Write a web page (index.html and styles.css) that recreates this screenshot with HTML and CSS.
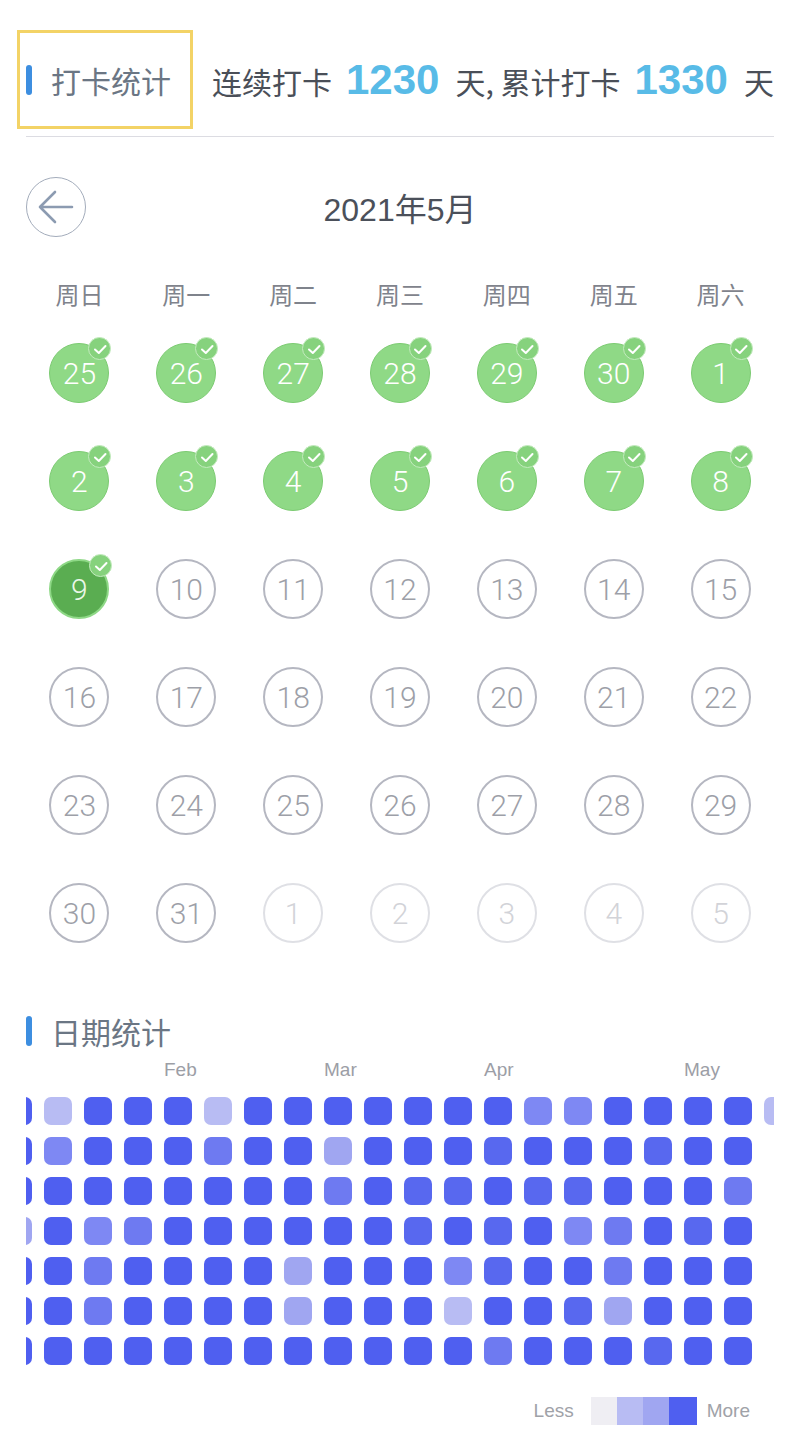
FILE: index.html
```html
<!DOCTYPE html>
<html lang="zh-CN">
<head>
  <meta charset="UTF-8" />
  <title>打卡统计</title>
  <link rel="stylesheet" href="styles.css">
</head>
<body>
  <div class="page">
    <div class="header">
      <div class="title-box">
        <h1 class="section-title">打卡统计</h1>
      </div>
      <p class="summary">连续打卡<b>1230</b>天, 累计打卡<b>1330</b>天</p>
    </div>
    <div class="divider"></div>

    <div class="calendar">
      <div class="cal-nav">
        <button class="nav-btn" aria-label="上个月">
          <svg width="36" height="36" viewBox="0 0 36 36">
            <path d="M2 18H34M17 3L2 18L17 33" fill="none" stroke="#8c9bb1" stroke-width="2.6" stroke-linecap="round" stroke-linejoin="round"/>
          </svg>
        </button>
        <h2 class="month-title">2021年5月</h2>
      </div>

      <div class="weekdays">
        <span>周日</span><span>周一</span><span>周二</span><span>周三</span><span>周四</span><span>周五</span><span>周六</span>
      </div>

      <div class="days" id="days"></div>
    </div>

    <div class="heat">
      <h1 class="section-title">日期统计</h1>
      <div class="heat-wrap">
        <div class="months" id="months"></div>
        <div class="heat-grid" id="heatGrid"></div>
      </div>
      <div class="legend">
        <span>Less</span>
        <div class="swatches">
          <i class="sw lv-0"></i><i class="sw lv-f"></i><i class="sw lv-e"></i><i class="sw lv-a"></i>
        </div>
        <span>More</span>
      </div>
    </div>
  </div>

  <script>
    // 日历：上月 25-30 + 本月 + 下月 1-5
    const cells = [];
    for (let d = 25; d <= 30; d++) cells.push({ n: d, type: 'done' });
    for (let d = 1; d <= 31; d++) {
      cells.push({ n: d, type: d < 9 ? 'done' : d === 9 ? 'today' : 'empty' });
    }
    for (let d = 1; d <= 5; d++) cells.push({ n: d, type: 'next' });

    const check = '<svg width="20" height="20" viewBox="0 0 20 20"><path d="M5 10.5l3.8 3.5L15.5 7" fill="none" stroke="#fff" stroke-width="2" stroke-linecap="round" stroke-linejoin="round"/></svg>';

    document.getElementById('days').innerHTML = cells.map(c => {
      const badge = (c.type === 'done' || c.type === 'today') ? `<span class="badge">${check}</span>` : '';
      return `<div class="cell"><div class="day ${c.type}">${c.n}${badge}</div></div>`;
    }).join('');

    // 热力图：每行一个字符串，每列一周；'.' 表示无数据
    const rows = [
      'afaaafaaaaaaaddaaaaf',
      'adaaacaaeaaabaaabaa.',
      'aaaaaaaacabbabbaaac.',
      'eadcaaaaaababadcaba.',
      'aacaaaaeaaadbaacaaa.',
      'aacaaaaeaaafaabeaaa.',
      'aaaaaaaaaaaacaaabaa.'
    ];
    let html = '';
    for (let c = 0; c < rows[0].length; c++) {
      for (let r = 0; r < 7; r++) {
        const lv = rows[r][c];
        if (lv !== '.') html += `<i class="sq lv-${lv}"></i>`;
      }
    }
    document.getElementById('heatGrid').innerHTML = html;

    const months = [['Feb', 4], ['Mar', 8], ['Apr', 12], ['May', 17]];
    const monthRow = document.getElementById('months');
    months.forEach(([name, col]) => {
      const el = document.createElement('span');
      el.textContent = name;
      el.style.gridColumn = col + 1;
      monthRow.appendChild(el);
    });
  </script>
</body>
</html>
```

FILE: styles.css
```css
:root {
  --title: #6b7684;
  --text: #4a4f58;
  --accent: #3d8ee0;
  --num: #58bbe7;
  --green: #8fd986;
  --green-border: #7ccb72;
  --green-dark: #5aad51;
  --gray-ring: #b5b7c1;
  --gray-num: #9d9fa8;
}
* { box-sizing: border-box; }
body {
  margin: 0;
  background: #fff;
  font-family: "Noto Sans CJK SC", "Liberation Sans", sans-serif;
  color: var(--text);
}
.page {
  width: 796px;
  padding: 30px 22px 0 26px;
}

/* 顶部标题 */
.header {
  display: flex;
  align-items: center;
  margin-left: -9px;
}
.title-box {
  width: 176px;
  height: 99px;
  border: 3px solid #f3d366;
  padding-left: 6px;
  display: flex;
  align-items: center;
}
.section-title {
  margin: 0;
  display: flex;
  align-items: center;
  gap: 19px;
  font-size: 30px;
  font-weight: 400;
  line-height: 36px;
  color: var(--title);
}
.section-title::before {
  content: "";
  width: 6px;
  height: 30px;
  border-radius: 3px;
  background: var(--accent);
}
.summary {
  margin: 0 0 0 19px;
  font-size: 30px;
  white-space: nowrap;
}
.summary b {
  font-family: "Liberation Sans", sans-serif;
  font-size: 42px;
  color: var(--num);
  margin: 0 16px 0 14px;
}
.divider {
  height: 1px;
  margin-top: 7px;
  background: #dcdce2;
}

/* 日历 */
.cal-nav {
  display: grid;
  grid-template-columns: 60px 1fr 60px;
  align-items: center;
  margin-top: 40px;
}
.nav-btn {
  width: 60px;
  height: 60px;
  padding: 0;
  border: 1.5px solid #a3acbb;
  border-radius: 50%;
  background: none;
  display: flex;
  align-items: center;
  justify-content: center;
}
.month-title {
  margin: 0;
  text-align: center;
  font-family: "Liberation Sans", "Noto Sans CJK SC", sans-serif;
  font-size: 32px;
  font-weight: 400;
  color: #4b505a;
}
.weekdays {
  display: grid;
  grid-template-columns: repeat(7, 1fr);
  margin-top: 42px;
  font-size: 24px;
  line-height: 30px;
  text-align: center;
  color: #7f838c;
}
.days {
  display: grid;
  grid-template-columns: repeat(7, 1fr);
  row-gap: 48px;
  margin-top: 34px;
}
.cell {
  display: flex;
  justify-content: center;
}
.day {
  position: relative;
  width: 60px;
  height: 60px;
  border-radius: 50%;
  border: 2px solid var(--gray-ring);
  display: flex;
  align-items: center;
  justify-content: center;
  font-family: Roboto, "Liberation Sans", sans-serif;
  font-weight: 300;
  font-size: 30px;
  color: var(--gray-num);
}
.day.done {
  background: var(--green);
  border: 1.5px solid var(--green-border);
  color: #fff;
}
.day.today {
  background: var(--green-dark);
  border: 2px solid #8ed886;
  color: #eaf7e8;
}
.day.next {
  border-color: #dfe0e5;
  color: #d2d3d8;
}
.badge {
  position: absolute;
  top: -7px;
  left: 38px;
  width: 23px;
  height: 23px;
  border-radius: 50%;
  background: #86d27d;
  border: 1.5px solid #c4ebbf;
  display: flex;
  align-items: center;
  justify-content: center;
}

/* 热力图 */
.heat {
  margin-top: 70px;
}
.heat-wrap {
  overflow: hidden;
}
.months,
.heat-grid {
  margin-left: -22px;
}
.months {
  display: grid;
  grid-template-columns: repeat(20, 28px);
  column-gap: 12px;
  margin-top: 10px;
  font-family: "Liberation Sans", sans-serif;
  font-size: 19px;
  line-height: 22px;
  color: #9c9ea6;
  white-space: nowrap;
}
.heat-grid {
  display: grid;
  grid-template-rows: repeat(7, 28px);
  grid-auto-flow: column;
  grid-auto-columns: 28px;
  gap: 12px;
  margin-top: 16px;
}
.sq {
  display: block;
  border-radius: 7px;
}
.lv-a { background: #4f5ff0; }
.lv-b { background: #5868ef; }
.lv-c { background: #6e7af1; }
.lv-d { background: #7e88f3; }
.lv-e { background: #a0a6f1; }
.lv-f { background: #b8bcf3; }
.lv-0 { background: #efeef3; }

.legend {
  display: flex;
  justify-content: flex-end;
  align-items: center;
  margin-top: 32px;
  padding-right: 24px;
  font-family: "Liberation Sans", sans-serif;
  font-size: 19px;
  color: #a0a2a8;
}
.swatches {
  display: flex;
  margin: 0 10px 0 17px;
}
.sw {
  display: block;
  width: 26px;
  height: 28px;
}
.sw:last-child {
  width: 28px;
}
```
